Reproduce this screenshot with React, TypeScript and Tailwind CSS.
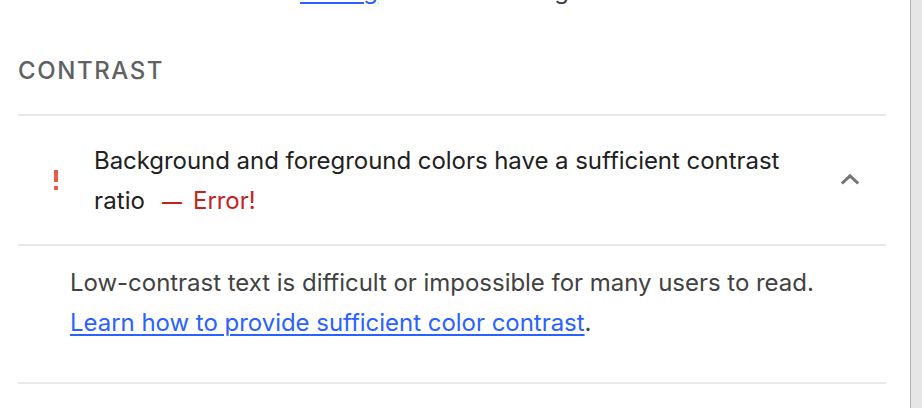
export default function App() {
  return (
    <div className="flex h-[408px] w-[922px] overflow-hidden bg-[#e6e6e6] font-['Inter',sans-serif] text-[24px] leading-[40px] tracking-[-0.045px] text-[#212121]">
      <main className="h-[408px] w-[911px] shrink-0 border-r border-[#b0b0b0] bg-white pl-[18px] pr-[25px]">
        <div className="flex h-[50px] items-start pl-[282px] text-[#424242]">
          <a className="-mt-[29px] tracking-[0.2px] text-[#2962ff] underline decoration-2 underline-offset-[3px]">testing</a>
          <span className="-mt-[29px] ml-[176px]">g</span>
        </div>
        <h2 className="h-[66px] w-[868px] border-b-2 border-[#e9e9e9] pt-px text-[24px] font-medium tracking-[1.58px] text-[#616161]">CONTRAST</h2>
        <section className="flex h-[130px] w-[868px] items-center border-b-2 border-[#e9e9e9]">
          <div className="-mt-px ml-[36px] flex w-1 flex-col gap-1">
            <i className="h-3 w-1 bg-[#ea5a4c]" />
            <i className="h-1 w-1 bg-[#ea5a4c]" />
          </div>
          <div className="ml-[36px] w-[710px] pt-[2px]">
            <div className="whitespace-nowrap">Background and foreground colors have a sufficient contrast</div>
            <div className="flex h-[40px]">
              <span className="w-[68px] tracking-[0.1px]">ratio</span>
              <span className="w-[31px] pt-px text-[20px] font-medium text-[#c5221f]">—</span>
              <span className="text-[#c5221f]">Error!</span>
            </div>
          </div>
          <svg className="ml-[36px] h-5 w-5" viewBox="0 0 20 20" fill="none" stroke="#757575" strokeWidth="3"><path d="m1.8 13.5 8.2-7.6 8.2 7.6" /></svg>
        </section>
        <section className="h-[138px] w-[868px] border-b-2 border-[#e9e9e9] pl-[52px] pt-[17px] tracking-[-0.03px] text-[#424242]">
          <p className="whitespace-nowrap">Low-contrast text is difficult or impossible for many users to read.</p>
          <p><a className="text-[#2962ff] underline decoration-2 underline-offset-[3px]">Learn how to provide sufficient color contrast</a>.</p>
        </section>
      </main>
    </div>
  );
}
